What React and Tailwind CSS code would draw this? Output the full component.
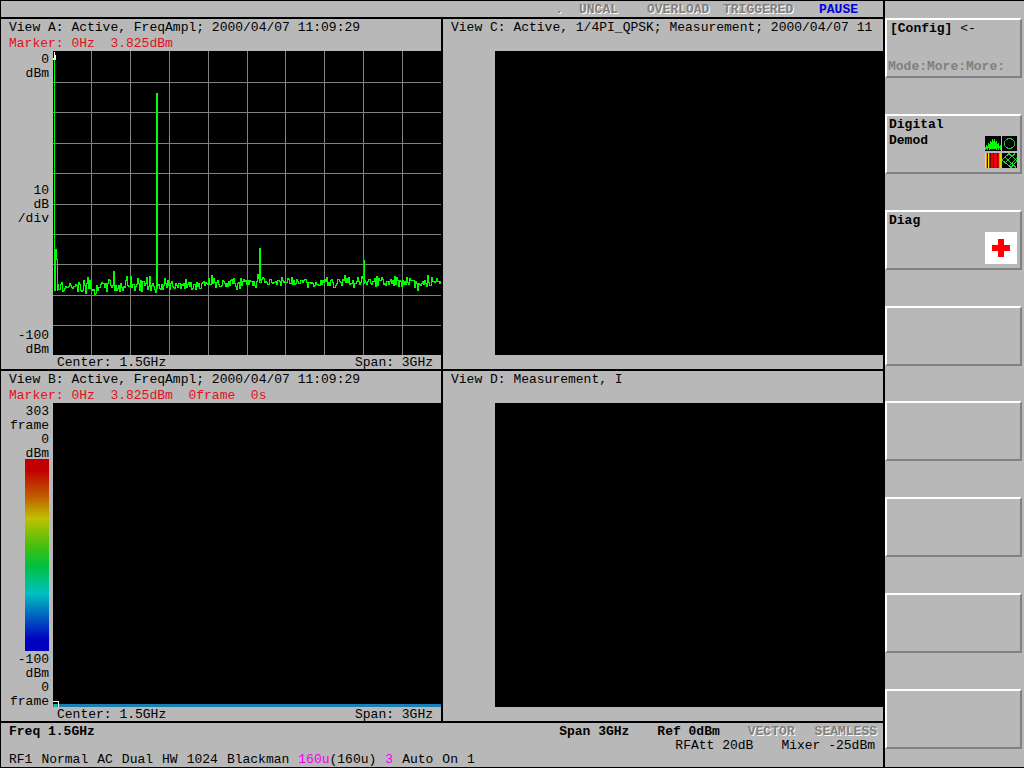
const PLOT_W = 388
const PLOT_H = 304

// strongest readings above the noise floor: pixel column -> pixel row
const PEAKS = {
  34: 226, 41: 243, 60: 220, 73: 225, 77: 225, 84: 227, 93: 226, 96: 225, 111: 227, 132: 228,
  158: 224, 160: 227, 178: 228, 204: 223, 205: 227, 209: 226, 238: 226, 273: 226, 291: 224,
  293: 227, 304: 226, 308: 225, 323: 225, 341: 225, 343: 226, 364: 239, 374: 224, 378: 226,
}

const CARRIERS = [
  { x: 103, top: 42, bottom: 238, width: 2 },
  { x: 206, top: 197, bottom: 230, width: 2 },
  { x: 311, top: 209, bottom: 233, width: 1 },
]

function buildTrace() {
  let seed = 4711
  const next = () => {
    seed = (seed * 16807) % 2147483647
    return seed / 2147483647
  }
  const points = []
  for (let x = 4; x < PLOT_W; x += 1) {
    const floor = x < 120 ? 235 : x < 150 ? 234 : x < 200 ? 232 : 231
    const swing = x < 120 ? 16 : 12
    const noise = Math.round((next() + next() - 1) * 0.5 * swing)
    const y = PEAKS[x] ?? floor + noise
    points.push(`H${x}V${y}`)
  }
  return `M4 238${points.join('')}`
}

const TRACE = buildTrace()

const STEPS = [1, 2, 3, 4, 5, 6, 7, 8, 9]

function SpectrumPlot() {
  return (
    <svg
      viewBox={`0 0 ${PLOT_W} ${PLOT_H}`}
      preserveAspectRatio="none"
      className="h-full w-full"
      shapeRendering="crispEdges"
      role="img"
      aria-label="Spectrum trace"
    >
      <g fill="#808080">
        {STEPS.map((i) => (
          <rect key={`v${i}`} x={Math.floor(i * 38.9 - 0.5)} y="0" width="1" height={PLOT_H} />
        ))}
        {STEPS.map((i) => (
          <rect key={`h${i}`} x="0" y={Math.round(i * 30.4 + 0.5)} width={PLOT_W} height="1" />
        ))}
      </g>
      <g fill="#00ff00">
        <rect x="1" y="4" width="1" height="236" />
        <rect x="1" y="198" width="2" height="42" />
        {CARRIERS.map((c) => (
          <rect key={c.x} x={c.x} y={c.top} width={c.width} height={c.bottom - c.top} />
        ))}
      </g>
      <path d="M3.5 198V208H4.5V240" fill="none" stroke="#00ff00" />
      <path d={TRACE} transform="translate(0.5 0.5)" fill="none" stroke="#00ff00" />
      <path d="M1.5 1V4.5M0.5 8.5L2.5 4.5V8.5H0" fill="none" stroke="#fff" />
    </svg>
  )
}

function FramePlot() {
  return (
    <div className="flex h-full items-end border-b-3 border-[#1880b4]">
      <svg width="7" height="6" viewBox="0 0 7 6" className="-mb-[3px]" shapeRendering="crispEdges">
        <path d="M0 0.5H5.5V6" fill="none" stroke="#fff" />
        <rect x="0" y="4" width="1" height="2" fill="#e03030" />
        <rect x="1" y="3" width="3" height="3" fill="#10c0a0" />
      </svg>
    </div>
  )
}

function AxisLabels({ lines }) {
  return (
    <div className="-mb-0.5 pt-0.5">
      {lines.map((line) => (
        <div key={line}>{line}</div>
      ))}
    </div>
  )
}

function ViewPanel({ title, marker, axis, center, span, children }) {
  return (
    <section className="flex min-w-0 flex-col bg-[#b8b8b8]">
      <div className="h-8 overflow-x-clip pt-px pl-2 leading-4 whitespace-pre">
        <h2>{title}</h2>
        {marker && <p className="text-[#e01020]">{marker}</p>}
      </div>
      <div className="flex flex-1">
        <div className="flex w-[52px] flex-col items-end justify-between pr-1 text-right leading-[14px]">
          {axis}
        </div>
        <div className="relative min-w-0 flex-1 bg-black">
          <div className="absolute inset-0">{children}</div>
        </div>
      </div>
      <div className="flex h-[14px] justify-between pr-2 pl-14 leading-4">
        <span>{center}</span>
        <span>{span}</span>
      </div>
    </section>
  )
}

function StatusFlag({ className = '', children }) {
  return (
    <span className={`font-bold text-[#808080] [text-shadow:1px_1px_0_#fff] ${className}`}>{children}</span>
  )
}

function SoftKey({ label, icon, children }) {
  return (
    <button
      aria-label={label || children ? undefined : 'Unused key'}
      className="flex h-[60px] w-full items-end justify-between border-2 border-t-white border-r-[#808080] border-b-[#808080] border-l-white text-left leading-4"
    >
      {children}
      {label && <span className="self-start pt-px pl-0.5 font-bold whitespace-pre-line">{label}</span>}
      {icon && <span className="pr-[3px] pb-1">{icon}</span>}
    </button>
  )
}

function DemodIcon() {
  return (
    <svg width="32" height="32" viewBox="0 0 32 32" shapeRendering="crispEdges" aria-hidden="true">
      <path d="M0 0H16V15H0ZM17 0H32V15H17ZM17 17H32V32H17Z" fill="#000" />
      <path
        d="M0 11H1V9H2V10H3V7H4V8H5V5H6V6H7V3H8V5H9V3H10V6H11V5H12V8H13V7H14V10H15V9H16V14H15V12H14V14H13V12H12V14H11V13H5V14H4V12H3V14H2V13H1V14H0Z"
        fill="#00ff00"
      />
      <path d="M23 2.5H26L29.5 5.5V9.5L26 12.5H23L19.5 9.5V5.5Z" fill="none" stroke="#20b830" />
      <rect x="0" y="17" width="16" height="15" fill="#e80000" />
      <path d="M0 17H1V32H0ZM3 17H4V32H3Z" fill="#f0f000" />
      <path d="M1 17H2V32H1ZM14 17H15V32H14Z" fill="#f09000" />
      <path d="M2 17H3V32H2ZM5 17H6V32H5ZM8 17H9V32H8ZM12 17H13V32H12Z" fill="#700000" />
      <path d="M15 17H16V32H15Z" fill="#c0e000" />
      <path
        d="M17 24L24 17.5L32 25L26 31.5ZM20 27L30 17.5M20 21L31 31.5M24 30L32 22"
        fill="none"
        stroke="#20d830"
      />
    </svg>
  )
}

function DiagIcon() {
  return (
    <svg width="32" height="32" viewBox="0 0 32 32" shapeRendering="crispEdges" aria-hidden="true">
      <rect width="32" height="32" fill="#fff" />
      <path d="M13 7H19V13H25V19H19V25H13V19H7V13H13Z" fill="#ff0000" />
    </svg>
  )
}

function TopBar() {
  return (
    <header className="flex h-4 justify-end bg-[#b8b8b8] pr-6 leading-[18px]">
      <StatusFlag className="mr-4">.</StatusFlag>
      <StatusFlag className="mr-7 w-10">UNCAL</StatusFlag>
      <StatusFlag className="mr-3 w-16">OVERLOAD</StatusFlag>
      <StatusFlag className="mr-6 w-[72px]">TRIGGERED</StatusFlag>
      <span className="w-10 font-bold text-[#0000e0]">PAUSE</span>
    </header>
  )
}

function SettingsBar() {
  return (
    <footer className="h-11 bg-[#b8b8b8] pt-0.5 pl-2 leading-[14px]">
      <div className="flex justify-between pr-1.5 font-bold">
        <span>Freq 1.5GHz</span>
        <div className="flex">
          <span className="mr-7">Span 3GHz</span>
          <span className="mr-7">Ref 0dBm</span>
          <StatusFlag className="mr-5">VECTOR</StatusFlag>
          <StatusFlag>SEAMLESS</StatusFlag>
        </div>
      </div>
      <div className="flex justify-end gap-7 pr-2">
        <span>RFAtt 20dB</span>
        <span>Mixer -25dBm</span>
      </div>
      <div className="flex gap-[9px]">
        <span>RF1</span>
        <span>Normal</span>
        <span>AC</span>
        <span>Dual</span>
        <span>HW</span>
        <span>1024</span>
        <span>Blackman</span>
        <span>
          <span className="text-[#f000f0]">160u</span>(160u)
        </span>
        <span className="text-[#f000f0]">3</span>
        <span>Auto</span>
        <span>On</span>
        <span>1</span>
      </div>
    </footer>
  )
}

export default function App() {
  return (
    <div className="flex min-h-screen gap-0.5 bg-black pt-px pb-px pl-px font-['Liberation_Mono',monospace] text-[13px] text-black">
      <div className="flex min-w-0 flex-1 flex-col gap-0.5">
        <TopBar />
        <main className="grid flex-1 auto-rows-fr grid-cols-2 gap-0.5">
          <ViewPanel
            title="View A: Active, FreqAmpl; 2000/04/07 11:09:29"
            marker="Marker: 0Hz  3.825dBm"
            center="Center: 1.5GHz"
            span="Span: 3GHz"
            axis={
              <>
                <AxisLabels lines={['0', 'dBm']} />
                <AxisLabels lines={['10', 'dB', '/div']} />
                <AxisLabels lines={['-100', 'dBm']} />
              </>
            }
          >
            <SpectrumPlot />
          </ViewPanel>
          <ViewPanel title="View C: Active, 1/4PI_QPSK; Measurement; 2000/04/07 11" />
          <ViewPanel
            title="View B: Active, FreqAmpl; 2000/04/07 11:09:29"
            marker="Marker: 0Hz  3.825dBm  0frame  0s"
            center="Center: 1.5GHz"
            span="Span: 3GHz"
            axis={
              <>
                <AxisLabels lines={['303', 'frame', '0', 'dBm']} />
                <div className="w-6 flex-1 bg-[linear-gradient(#c00000_6%,#c06000_20%,#c0c000_31%,#40c010_46%,#00c040_56%,#00c0c0_70%,#0060c0_82%,#0000c0_94%)]" />
                <AxisLabels lines={['-100', 'dBm', '0', 'frame']} />
              </>
            }
          >
            <FramePlot />
          </ViewPanel>
          <ViewPanel title="View D: Measurement, I" />
        </main>
        <SettingsBar />
      </div>

      <nav className="flex w-[139px] flex-col justify-between bg-[#b8b8b8] pt-[17px] pr-0.5 pb-[18px]">
        <SoftKey>
          <span className="flex h-full flex-col justify-between pt-px pb-px pl-px font-bold">
            <span className="pl-0.5">
              [Config] <span className="font-normal">&lt;-</span>
            </span>
            <span className="text-[#808080]">Mode:More:More:</span>
          </span>
        </SoftKey>
        <SoftKey label={'Digital\nDemod'} icon={<DemodIcon />} />
        <SoftKey label="Diag" icon={<DiagIcon />} />
        <SoftKey />
        <SoftKey />
        <SoftKey />
        <SoftKey />
        <SoftKey />
      </nav>
    </div>
  )
}
